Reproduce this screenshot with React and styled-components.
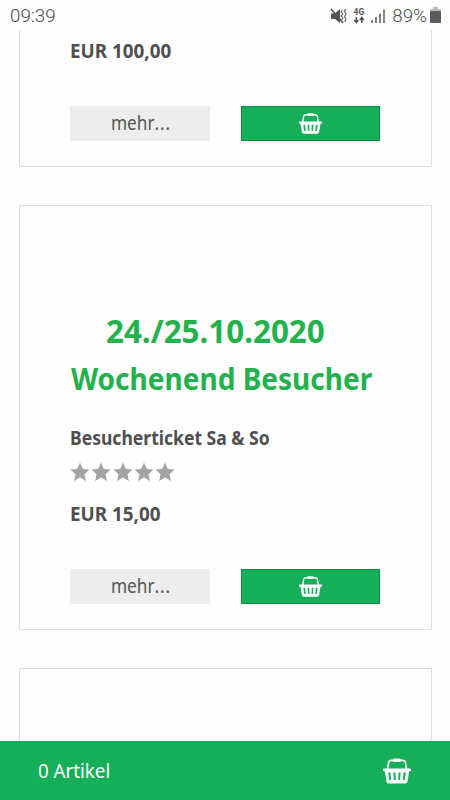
import React from "react";
import styled, { createGlobalStyle } from "styled-components";

const GlobalStyle = createGlobalStyle`
  *, *::before, *::after { box-sizing: border-box; }
  html, body { margin: 0; padding: 0; overflow: hidden; background: #fefefe; }
  body { font-family: "Noto Sans", "Open Sans", sans-serif; color: #4f4f4f; }
`;

const Screen = styled.div`
  display: flex;
  flex-direction: column;
  width: 450px;
  height: 800px;
  overflow: hidden;
  background: #fefefe;
`;

const StatusBar = styled.header`
  display: flex;
  flex: 0 0 30px;
  align-items: center;
  justify-content: space-between;
  padding: 1px 9px 0 10px;
  color: #4c4c4c;
  font-family: Roboto, sans-serif;
  font-size: 18.8px;
  font-weight: 300;
  line-height: 28px;
`;

const StatusIcons = styled.svg`
  display: block;
  width: 58px;
  height: 22px;
  margin-right: 4px;
`;

const StatusGroup = styled.div`
  display: flex;
  align-items: center;
`;

const Battery = styled.svg`
  display: block;
  width: 11px;
  height: 17px;
  margin-left: 3px;
`;

const Narrow = styled.span`
  display: inline-block;
  white-space: nowrap;
  transform: scaleX(${(p) => p.$scale || 1});
  transform-origin: ${(p) => p.$origin || "left"} center;
`;

const Ellipsis = styled.span`
  letter-spacing: 1px;
`;

const Products = styled.main`
  display: flex;
  flex: 1 1 0;
  min-height: 0;
  flex-direction: column;
  gap: 38px;
  padding: 0 18.5px 0 19px;
  overflow: hidden;
`;

const Card = styled.article`
  display: flex;
  flex: 0 0 ${(p) => p.$height}px;
  flex-direction: column;
  justify-content: flex-end;
  padding: 0 50px 25px;
  border: 1px solid #dedede;
  border-top-width: ${(p) => (p.$cut ? 0 : 1)}px;
`;

const Banner = styled.div`
  display: flex;
  flex-direction: column;
  height: 96px;
  margin-bottom: 21px;
  color: #22b14c;
  font-weight: 700;
  white-space: nowrap;
`;

const BannerLine = styled.div`
  flex: 0 0 48px;
  padding-left: ${(p) => p.$indent}px;
  font-size: ${(p) => p.$size}px;
  line-height: 48px;
`;

const Label = styled.div`
  height: 28px;
  font-size: 19.5px;
  font-weight: 700;
  line-height: 28px;
`;

const Rating = styled.div`
  display: flex;
  gap: 1.3px;
  height: 20px;
  margin: 10px 0 18px;
`;

const StarShape = styled.svg`
  width: 20px;
  height: 20px;
  fill: #a3a3a3;
`;

const Actions = styled.div`
  display: grid;
  grid-template-columns: 139.5px 139.5px;
  column-gap: 31px;
  height: 35px;
  margin-top: 41px;
`;

const Button = styled.button`
  display: flex;
  align-items: center;
  justify-content: center;
  padding: ${(p) => (p.$primary ? "0" : "0 0 2px 3px")};
  border: ${(p) => (p.$primary ? "1px solid #0b8e41" : "0")};
  background: ${(p) => (p.$primary ? "#15af59" : "#ededed")};
  color: ${(p) => (p.$primary ? "#fff" : "#555")};
  font: 400 19.5px/33px "Noto Sans", sans-serif;
`;

const BasketSvg = styled.svg`
  display: block;
  width: ${(p) => p.$size}px;
  height: ${(p) => p.$size}px;
`;

const CartBar = styled.footer`
  display: flex;
  flex: 0 0 59px;
  align-items: center;
  justify-content: space-between;
  padding: 0 39px 0 38px;
  background: #15af59;
  color: #fff;
  font-size: 19.5px;
  line-height: 59px;
`;

function Basket({ size }) {
  return (
    <BasketSvg $size={size} viewBox="0 0 28 28" aria-hidden="true">
      <path d="M4.4 13 5.6 5.4Q6 3.5 8 3.3H20Q22 3.5 22.4 5.4L23.6 13" fill="none" stroke="currentColor" strokeWidth="1.7" />
      <rect x="10" y="1.5" width="8" height="3.5" rx="1.6" fill="currentColor" />
      <path fill="currentColor" fillRule="evenodd" d="M.7 11.5H27.3Q28 11.5 28 12.3V13.4Q28 14.2 27.1 14.2H26.2L24.4 24.8Q24.1 26.5 22.4 26.5H5.6Q3.9 26.5 3.6 24.8L1.8 14.2H.9Q0 14.2 0 13.4V12.3Q0 11.5 .7 11.5ZM5.2 15.5 6.3 23H8.2L7.4 15.5ZM10.4 15.5 10.9 23H12.7L12.5 15.5ZM15.5 15.5 15.3 23H17.1L17.6 15.5ZM20.6 15.5 19.8 23H21.7L22.8 15.5Z" />
    </BasketSvg>
  );
}

function Star() {
  return (
    <StarShape viewBox="0 0 20 20" aria-hidden="true">
      <path d="M10 .5 12.8 6.9 19.6 7.5 14.5 12.2 15.9 19 10 15.5 4.1 19 5.5 12.2.4 7.5 7.2 6.9Z" />
    </StarShape>
  );
}

function ProductActions() {
  return (
    <Actions>
      <Button><Narrow $scale={0.885} $origin="center">mehr<Ellipsis>...</Ellipsis></Narrow></Button>
      <Button $primary aria-label="In den Warenkorb"><Basket size={23} /></Button>
    </Actions>
  );
}

export default function App() {
  return (
    <>
      <GlobalStyle />
      <Screen>
        <StatusBar>
          <Narrow>09:39</Narrow>
          <StatusGroup>
            <StatusIcons viewBox="0 0 58 22" aria-hidden="true">
              <path d="M1 8.5H5L10 4V18L5 14H1Z" fill="#555" />
              <path d="M1 4 13 18" stroke="#555" strokeWidth="1.6" />
              <path d="M12.2 5 11.2 7 12.8 9 11.2 11 12.8 13 11.6 15M15.6 4 14.4 6.3 16 9 14.4 11.5 16 14 14.8 17" fill="none" stroke="#666" strokeWidth="1.2" />
              <text x="23.5" y="9.5" fill="#555" fontFamily="Roboto, sans-serif" fontSize="8.5" fontWeight="700">4G</text>
              <path d="M26.3 12V17M24.3 15 26.3 17.5 28.3 15M31.8 18V13M29.8 15 31.8 12.5 33.8 15" fill="none" stroke="#555" strokeWidth="1.5" />
              <path d="M42 15V18M46 12V18M50 8.5V18M54 4.5V18" stroke="#777" strokeWidth="1.8" />
            </StatusIcons>
            <Narrow>89%</Narrow>
            <Battery viewBox="0 0 11 17" aria-hidden="true">
              <path d="M3 0H8V2H11V5H0V2H3Z" fill="#bbb" />
              <rect y="4" width="11" height="12" rx="1" fill="#5b5b5b" />
            </Battery>
          </StatusGroup>
        </StatusBar>
        <Products>
          <Card $height={137} $cut>
            <Label><Narrow $scale={0.965}>EUR 100,00</Narrow></Label>
            <ProductActions />
          </Card>
          <Card $height={425}>
            <Banner>
              <BannerLine $indent={36} $size={31.5}><Narrow $scale={0.995}>24./25.10.2020</Narrow></BannerLine>
              <BannerLine $indent={1} $size={29.5}><Narrow $scale={0.95}>Wochenend Besucher</Narrow></BannerLine>
            </Banner>
            <Label><Narrow $scale={0.9}>Besucherticket Sa &amp; So</Narrow></Label>
            <Rating aria-label="Bewertung">
              <Star /><Star /><Star /><Star /><Star />
            </Rating>
            <Label><Narrow $scale={0.965}>EUR 15,00</Narrow></Label>
            <ProductActions />
          </Card>
          <Card $height={425} />
        </Products>
        <CartBar>
          <Narrow $scale={0.96}>0 Artikel</Narrow>
          <Basket size={28} />
        </CartBar>
      </Screen>
    </>
  );
}
